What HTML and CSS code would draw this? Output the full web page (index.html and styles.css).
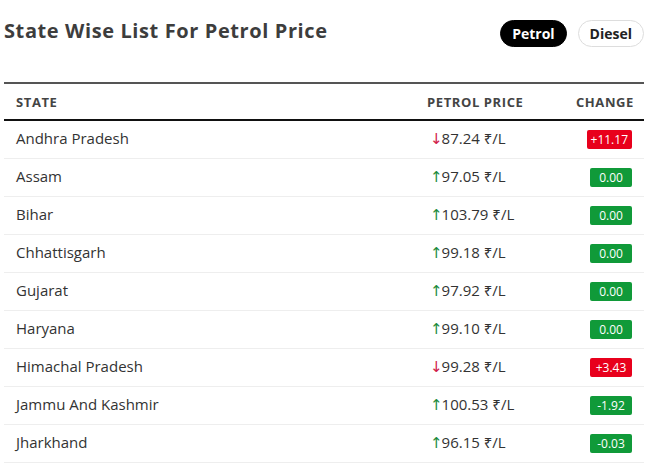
FILE: index.html
```html
<!DOCTYPE html>
<html>
<head>
<meta charset="utf-8">
<link rel="stylesheet" href="styles.css">
</head>
<body>
<div class="page">
  <div class="top">
    <h1 class="title">State Wise List For Petrol Price</h1>
    <div class="tabs">
      <button class="tab active">Petrol</button>
      <button class="tab">Diesel</button>
    </div>
  </div>
  <table class="list">
    <thead>
      <tr><th class="c-state">STATE</th><th class="c-price">PETROL PRICE</th><th class="c-change">CHANGE</th></tr>
    </thead>
    <tbody>
      <tr><td class="c-state">Andhra Pradesh</td><td class="c-price"><span class="arr down">↓</span>87.24 ₹/L</td><td class="c-change"><span class="badge red">+11.17</span></td></tr>
      <tr><td class="c-state">Assam</td><td class="c-price"><span class="arr up">↑</span>97.05 ₹/L</td><td class="c-change"><span class="badge green">0.00</span></td></tr>
      <tr><td class="c-state">Bihar</td><td class="c-price"><span class="arr up">↑</span>103.79 ₹/L</td><td class="c-change"><span class="badge green">0.00</span></td></tr>
      <tr><td class="c-state">Chhattisgarh</td><td class="c-price"><span class="arr up">↑</span>99.18 ₹/L</td><td class="c-change"><span class="badge green">0.00</span></td></tr>
      <tr><td class="c-state">Gujarat</td><td class="c-price"><span class="arr up">↑</span>97.92 ₹/L</td><td class="c-change"><span class="badge green">0.00</span></td></tr>
      <tr><td class="c-state">Haryana</td><td class="c-price"><span class="arr up">↑</span>99.10 ₹/L</td><td class="c-change"><span class="badge green">0.00</span></td></tr>
      <tr><td class="c-state">Himachal Pradesh</td><td class="c-price"><span class="arr down">↓</span>99.28 ₹/L</td><td class="c-change"><span class="badge red">+3.43</span></td></tr>
      <tr><td class="c-state">Jammu And Kashmir</td><td class="c-price"><span class="arr up">↑</span>100.53 ₹/L</td><td class="c-change"><span class="badge green">-1.92</span></td></tr>
      <tr><td class="c-state">Jharkhand</td><td class="c-price"><span class="arr up">↑</span>96.15 ₹/L</td><td class="c-change"><span class="badge green">-0.03</span></td></tr>
    </tbody>
  </table>
</div>
</body>
</html>
```
FILE: styles.css
```css
* { box-sizing: border-box; }
body {
  margin: 0;
  background: #fff;
  font-family: "Open Sans", "Noto Sans", sans-serif;
  color: #333;
}
.page {
  width: 640px;
  margin-left: 4px;
}
.top {
  display: flex;
  justify-content: space-between;
  align-items: flex-start;
  height: 82px;
  padding-top: 18px;
}
.title {
  margin: 0;
  font-size: 20px;
  font-weight: 700;
  color: #3d3d3d;
  line-height: 26px;
  letter-spacing: 0.6px;
}
.tabs {
  display: flex;
  gap: 11px;
  padding-top: 2px;
}
.tab {
  font-family: inherit;
  height: 27px;
  padding: 0 11px;
  border-radius: 14px;
  border: 1px solid #ddd;
  background: #fff;
  color: #222;
  font-size: 14px;
  font-weight: 700;
  line-height: 25px;
}
.tab.active {
  background: #000;
  color: #fff;
  border-color: #000;
}
.list {
  width: 640px;
  table-layout: fixed;
  border-collapse: collapse;
  border-top: 2px solid #555;
}
.list th {
  height: 37px;
  font-size: 13px;
  font-weight: 700;
  letter-spacing: 0.6px;
  color: #444;
  text-align: left;
  border-bottom: 2px solid #111;
  padding: 0;
}
.list td {
  height: 38px;
  font-size: 15px;
  border-bottom: 1px solid #eee;
  padding: 0 0 2px;
  white-space: nowrap;
}
.list .c-state { width: 423px; padding-left: 12px; }
.list .c-price { width: 140px; }
.list td.c-price { padding-left: 3px; }
.list .c-change { width: 77px; text-align: right; padding-right: 10px; }
.list td.c-change { padding-right: 12px; }
.arr {
  font-family: "DejaVu Sans", sans-serif;
  font-size: 15px;
  margin-right: -1px;
}
.arr.down { color: #d0204a; }
.arr.up { color: #1a8a3a; }
.badge {
  display: inline-block;
  min-width: 42px;
  text-align: center;
  height: 19px;
  line-height: 19px;
  padding: 0 4px;
  font-size: 12px;
  color: #fff;
  border-radius: 2px;
}
.badge.red { background: #e8001c; }
.badge.green { background: #109a39; }
```
